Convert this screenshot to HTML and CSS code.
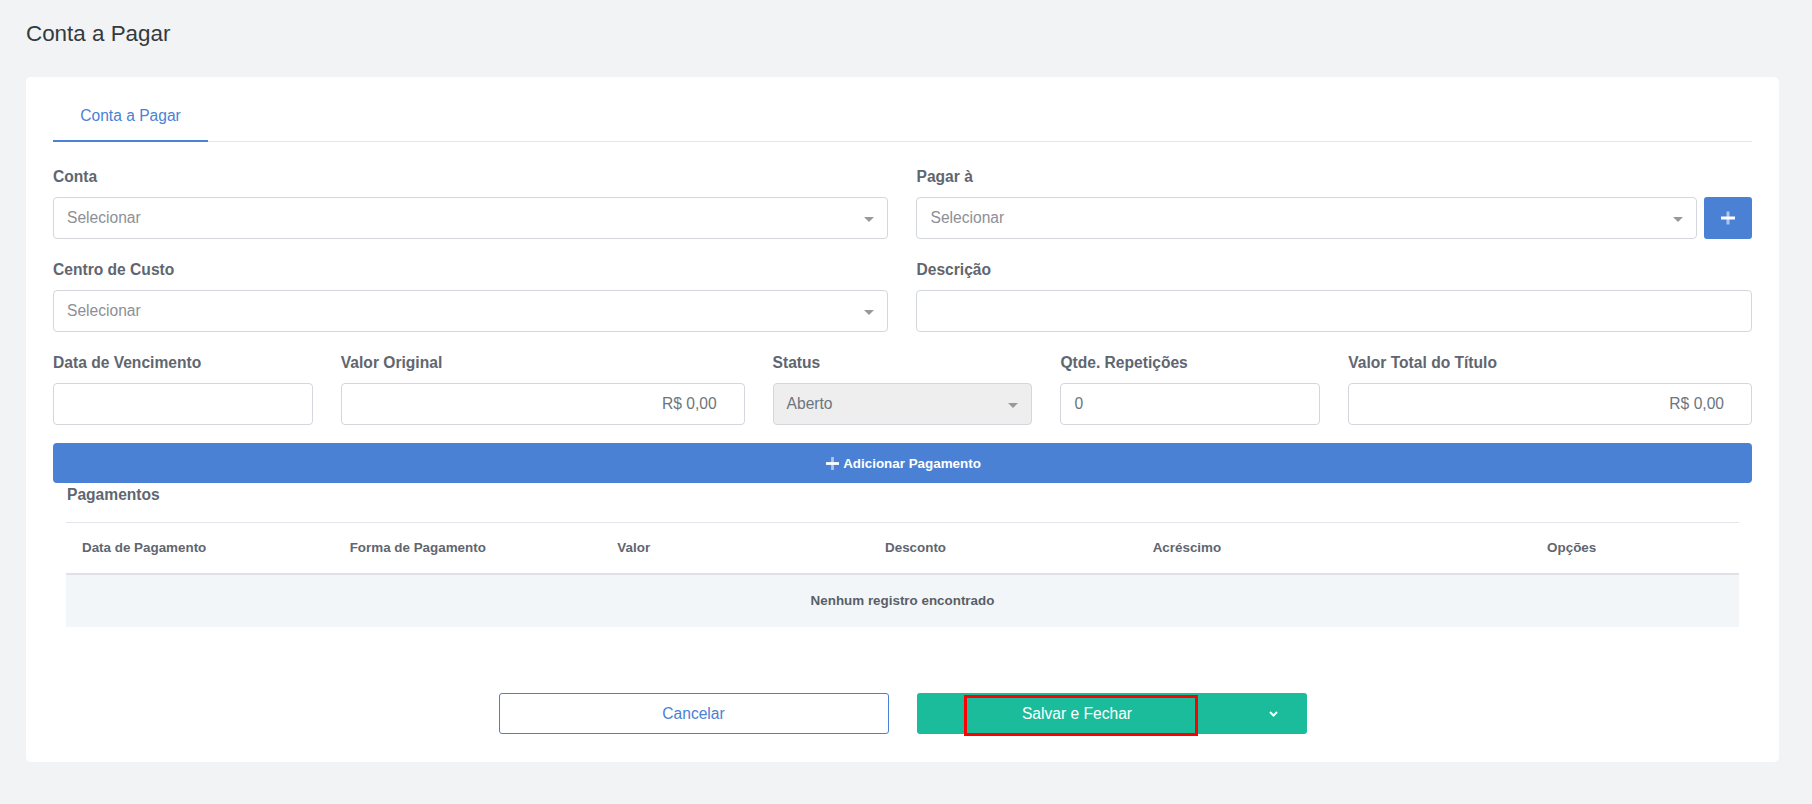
FILE: index.html
```html
<!DOCTYPE html>
<html lang="pt-BR">
<head>
<meta charset="utf-8">
<title>Conta a Pagar</title>
<link rel="stylesheet" href="styles.css">
</head>
<body>
<div class="page">
  <h1 class="page-title">Conta a Pagar</h1>
  <div class="card">
    <div class="tabs">
      <div class="tab active">Conta a Pagar</div>
    </div>

    <div class="form-grid">
      <div class="field span-6">
        <label class="label">Conta</label>
        <div class="select"><span class="placeholder">Selecionar</span><span class="caret"></span></div>
      </div>
      <div class="field span-6">
        <label class="label">Pagar à</label>
        <div class="input-group">
          <div class="select grow"><span class="placeholder">Selecionar</span><span class="caret"></span></div>
          <button class="btn-add" type="button">
            <svg width="14" height="14" viewBox="0 0 14 14"><rect x="5.5" y="0.5" width="3" height="13" fill="#ffffff" opacity="0.55"/><rect x="0" y="5.5" width="14" height="3" fill="#ffffff"/></svg>
          </button>
        </div>
      </div>

      <div class="field span-6">
        <label class="label">Centro de Custo</label>
        <div class="select"><span class="placeholder">Selecionar</span><span class="caret"></span></div>
      </div>
      <div class="field span-6">
        <label class="label">Descrição</label>
        <div class="input"></div>
      </div>

      <div class="field span-2">
        <label class="label">Data de Vencimento</label>
        <div class="input"></div>
      </div>
      <div class="field span-3">
        <label class="label">Valor Original</label>
        <div class="input money">R$ 0,00</div>
      </div>
      <div class="field span-2">
        <label class="label">Status</label>
        <div class="select disabled"><span class="value">Aberto</span><span class="caret"></span></div>
      </div>
      <div class="field span-2">
        <label class="label">Qtde. Repetições</label>
        <div class="input value">0</div>
      </div>
      <div class="field span-3">
        <label class="label">Valor Total do Título</label>
        <div class="input money">R$ 0,00</div>
      </div>
    </div>

    <button class="btn-primary-wide" type="button">
      <svg width="13" height="13" viewBox="0 0 14 14"><rect x="5.5" y="0" width="3" height="14" fill="#ffffff" opacity="0.55"/><rect x="0" y="5.5" width="14" height="3" fill="#ffffff"/></svg>
      <span>Adicionar Pagamento</span>
    </button>

    <div class="payments">
      <div class="payments-title">Pagamentos</div>
      <table class="table">
        <thead>
          <tr>
            <th class="c1">Data de Pagamento</th>
            <th class="c1">Forma de Pagamento</th>
            <th class="c1">Valor</th>
            <th class="c1">Desconto</th>
            <th class="c1">Acréscimo</th>
            <th class="c-opt">Opções</th>
          </tr>
        </thead>
        <tbody>
          <tr>
            <td colspan="6" class="empty">Nenhum registro encontrado</td>
          </tr>
        </tbody>
      </table>
    </div>

    <div class="footer">
      <button class="btn-outline" type="button">Cancelar</button>
      <div class="split">
        <button class="split-main" type="button">Salvar e Fechar</button>
        <button class="split-toggle" type="button">
          <svg width="9" height="6" viewBox="0 0 9 6"><path d="M1 1 L4.5 4.5 L8 1" fill="none" stroke="#ffffff" stroke-width="2"/></svg>
        </button>
        <div class="highlight"></div>
      </div>
    </div>
  </div>
</div>
</body>
</html>
```

FILE: styles.css
```css
* { box-sizing: border-box; }

html, body {
  margin: 0;
  padding: 0;
}

body {
  background: #f2f3f5;
  font-family: "Liberation Sans", Arial, Helvetica, sans-serif;
  color: #343a40;
  width: 1812px;
  height: 804px;
  overflow: hidden;
}

.page {
  padding: 21px 33px 42px 26px;
}

.page-title {
  margin: 0 0 30px 0;
  font-size: 22.4px;
  line-height: 26px;
  font-weight: 400;
  color: #343a40;
}

.card {
  background: #ffffff;
  border-radius: 5px;
  padding: 0 27px 28px 27px;
}

.tabs {
  display: flex;
  border-bottom: 1px solid #e3e6ea;
  padding-top: 28px;
}

.tab {
  width: 155px;
  text-align: center;
  font-size: 15.6px;
  line-height: 22px;
  padding-bottom: 13px;
  color: #4a81d4;
  border-bottom: 2px solid #4a81d4;
  margin-bottom: -1px;
}

.form-grid {
  display: grid;
  grid-template-columns: repeat(12, 1fr);
  column-gap: 28px;
  row-gap: 21px;
  margin-top: 25px;
}

.span-6 { grid-column: span 6; }
.span-3 { grid-column: span 3; }
.span-2 { grid-column: span 2; }

.field {
  display: flex;
  flex-direction: column;
}

.label {
  font-size: 15.6px;
  line-height: 20px;
  font-weight: 700;
  color: #5f6670;
  margin-bottom: 10px;
}

.select,
.input {
  position: relative;
  height: 42px;
  border: 1px solid #d3d7dc;
  border-radius: 4px;
  background: #ffffff;
  display: flex;
  align-items: center;
  padding: 0 13px;
  font-size: 15.6px;
  color: #6c757d;
}

.select .placeholder {
  color: #8c9096;
}

.select .value,
.input.value {
  color: #6c757d;
}

.select.disabled {
  background: #eeeeee;
}

.caret {
  position: absolute;
  right: 13px;
  top: 19px;
  width: 0;
  height: 0;
  border-left: 5px solid transparent;
  border-right: 5px solid transparent;
  border-top: 5px solid #999999;
}

.input.money {
  justify-content: flex-end;
  padding-right: 27px;
}

.input-group {
  display: flex;
  gap: 7px;
}

.grow { flex: 1; }

.btn-add {
  width: 48px;
  height: 42px;
  border: none;
  border-radius: 3px;
  background: #4a81d4;
  display: flex;
  align-items: center;
  justify-content: center;
  padding: 0;
}

.btn-primary-wide {
  display: flex;
  align-items: center;
  justify-content: center;
  gap: 4px;
  width: 100%;
  height: 40px;
  margin-top: 18px;
  border: none;
  border-radius: 4px;
  background: #4a81d4;
  color: #ffffff;
  font-family: "Liberation Sans", Arial, sans-serif;
  font-size: 13.4px;
  font-weight: 700;
  padding-right: 4px;
}

.payments {
  padding: 0 13px;
}

.payments-title {
  font-size: 15.6px;
  line-height: 20px;
  font-weight: 700;
  color: #5f6670;
  margin-top: 2px;
  padding-left: 1px;
}

.table {
  width: 100%;
  border-collapse: collapse;
  margin-top: 17px;
  font-size: 13.4px;
}

.table th {
  border-top: 1px solid #e2e5e9;
  border-bottom: 2px solid #dee2e6;
  padding: 15px 16px;
  line-height: 20px;
  font-weight: 700;
  color: #5f6670;
  text-align: left;
}

.table th.c1 { width: 16%; }
.table th.c-opt { text-align: center; }

.table td.empty {
  background: #f3f6f9;
  text-align: center;
  font-weight: 700;
  color: #5a5f66;
  padding: 16px;
  line-height: 20px;
}

.footer {
  display: flex;
  justify-content: center;
  gap: 28px;
  margin-top: 66px;
}

.btn-outline {
  width: 390px;
  height: 41px;
  background: #ffffff;
  border: 1px solid #4a81d4;
  border-radius: 3px;
  color: #4a81d4;
  font-family: "Liberation Sans", Arial, sans-serif;
  font-size: 15.6px;
}

.split {
  position: relative;
  width: 390px;
  height: 41px;
  display: flex;
  background: #1abc9c;
  border-radius: 3px;
}

.split-main {
  flex: 1;
  border: none;
  background: transparent;
  color: #ffffff;
  font-family: "Liberation Sans", Arial, sans-serif;
  font-size: 15.6px;
  padding: 0 7px 0 0;
}

.split-toggle {
  width: 62px;
  border: none;
  background: transparent;
  display: flex;
  align-items: center;
  justify-content: center;
  padding: 0 4px 0 0;
}

.highlight {
  position: absolute;
  left: 47px;
  top: 2px;
  width: 234px;
  height: 41px;
  border: 3px solid #ff0000;
  pointer-events: none;
}
```
